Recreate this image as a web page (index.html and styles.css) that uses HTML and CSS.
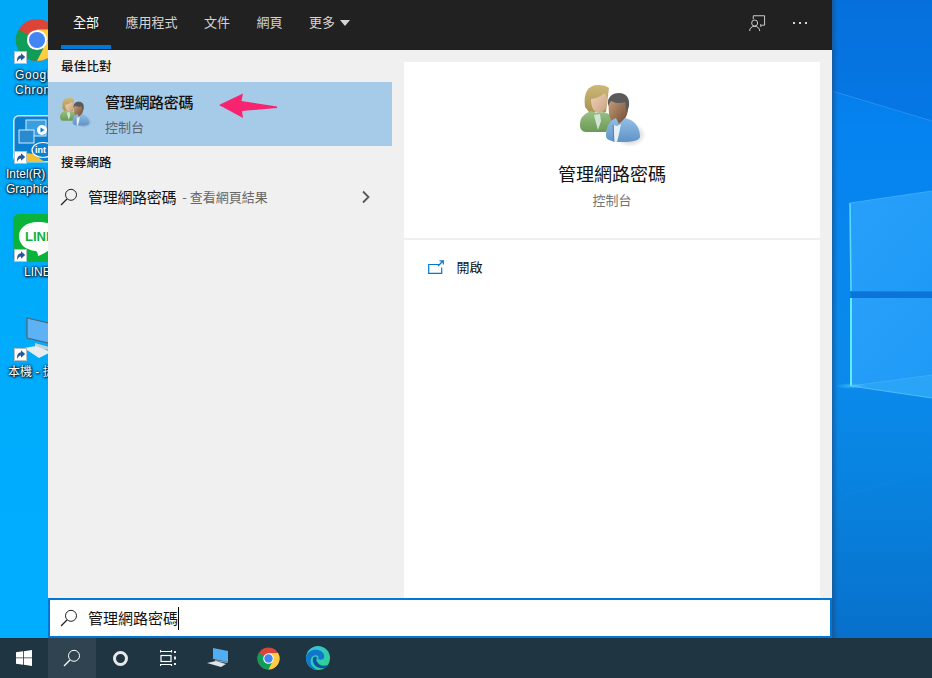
FILE: index.html
```html
<!DOCTYPE html>
<html lang="zh-Hant">
<head>
<meta charset="utf-8">
<title>管理網路密碼</title>
<link rel="stylesheet" href="styles.css">
</head>
<body>
<svg class="defs" width="0" height="0" aria-hidden="true">
  <defs>
    <linearGradient id="gGreen" x1="0" y1="0" x2="0" y2="1"><stop offset="0" stop-color="#9cc184"/><stop offset="1" stop-color="#6a9a56"/></linearGradient>
    <linearGradient id="gBlue" x1="0" y1="0" x2="0" y2="1"><stop offset="0" stop-color="#93bfe6"/><stop offset="1" stop-color="#5f92c6"/></linearGradient>
    <linearGradient id="gHair" x1="0" y1="0" x2="0" y2="1"><stop offset="0" stop-color="#cdb877"/><stop offset="1" stop-color="#a99455"/></linearGradient>
    <linearGradient id="gFaceW" x1="0" y1="0" x2="1" y2="1"><stop offset="0" stop-color="#f0d2b6"/><stop offset="1" stop-color="#c9a183"/></linearGradient>
    <linearGradient id="gFaceM" x1="0" y1="0" x2="1" y2="1"><stop offset="0" stop-color="#c9a07c"/><stop offset="1" stop-color="#6a4630"/></linearGradient>
    <radialGradient id="gShadow"><stop offset="0" stop-color="#000" stop-opacity=".32"/><stop offset="1" stop-color="#000" stop-opacity="0"/></radialGradient>
    <symbol id="people" viewBox="0 0 66 62">
      <ellipse cx="50" cy="50" rx="16" ry="12" fill="url(#gShadow)"/>
      <path d="M5 22C3 8 8 0 18 0c5 0 9 1 11 3l-3 24H9z" fill="url(#gHair)"/>
      <path d="M11 14c4 0 10-3 14-6 2 3 3 7 2 11-1 5-4 9-8 9-5 0-8-6-8-14z" fill="url(#gFaceW)"/>
      <path d="M0 40c0-8 4-11 11-14l6 2 7-1c5 2 9 4 9 8L26 47H6c-4 0-6-3-6-7z" fill="url(#gGreen)"/>
      <path d="M14 30l6-1 1 7-3 9-2-7z" fill="#cfe6d6"/>
      <path d="M28 14h19c2 9 1 17-4 22l-5 4c-5-1-8-5-9-11z" fill="url(#gFaceM)"/>
      <path d="M28 21C27 12 32 8 39 8c7 0 11 5 10 13l-2 7c-1-4-1-8-2-11-5 2-10 1-14-1-1 1-2 3-3 5z" fill="#5a5a5a"/>
      <path d="M26 51c0-9 3-15 10-18l3 6 6-6c9 2 15 8 15 19 0 3-8 5-17 5-11 0-17-2-17-6z" fill="url(#gBlue)"/>
      <path d="M34 40l3 1 4-2-2 10-2 8h-3z" fill="#e6eef6"/>
      <path d="M33 40l1 17" stroke="#4a78a8" stroke-width=".8" fill="none"/>
    </symbol>
    <symbol id="badge" viewBox="0 0 13 13">
      <rect x=".5" y=".5" width="12" height="12" fill="#fff" stroke="#b4bfc8"/>
      <path d="M3 11c-.2-4.500 1.500-6.500 4-6.700V2.200l4.200 3.700-4.200 3.800V7.600C5.200 7.800 4 9 3 11z" fill="#27589a"/>
    </symbol>
    <symbol id="chrome" viewBox="0 0 48 48">
      <circle cx="24" cy="24" r="23" fill="#db4437"/>
      <path d="M24 24L4 12.500A23 23 0 0 0 24 47l11.500-20z" fill="#0f9d58"/>
      <path d="M24 24l11.500 0L24 47A23 23 0 0 0 44 12.500H24z" fill="#ffcd40"/>
      <circle cx="24" cy="24" r="11" fill="#fff"/>
      <circle cx="24" cy="24" r="8.800" fill="#4285f4"/>
    </symbol>
    <symbol id="glass" viewBox="0 0 18 18">
      <circle cx="11" cy="6.800" r="5.500" fill="none" stroke="currentColor" stroke-width="1"/>
      <path d="M7 11L1 17" fill="none" stroke="currentColor" stroke-width="1.200"/>
    </symbol>
  </defs>
</svg>

<div class="screen">
  <main class="desktop">
    <svg class="wallpaper" viewBox="0 0 932 638" preserveAspectRatio="none" aria-hidden="true">
      <defs>
        <linearGradient id="wallL" x1="0" y1="0" x2="0" y2="1"><stop offset="0" stop-color="#00a8f8"/><stop offset="1" stop-color="#00aeff"/></linearGradient>
        <linearGradient id="wallR" x1="0" y1="0" x2="0" y2="1"><stop offset="0" stop-color="#0672dc"/><stop offset=".2" stop-color="#0583f0"/><stop offset=".6" stop-color="#0a8aec"/><stop offset=".8" stop-color="#0880dc"/><stop offset="1" stop-color="#0770cc"/></linearGradient>
        <linearGradient id="pane" x1="0" y1="0" x2="1" y2="1"><stop offset="0" stop-color="#28a0fa"/><stop offset="1" stop-color="#1e9af6"/></linearGradient>
        <linearGradient id="edge" x1="0" y1="0" x2="1" y2="0"><stop offset="0" stop-color="#1a4c80" stop-opacity=".6"/><stop offset="1" stop-color="#1a4c80" stop-opacity="0"/></linearGradient>
        <radialGradient id="glow"><stop offset="0" stop-color="#6fe8ff" stop-opacity=".45"/><stop offset="1" stop-color="#6fe8ff" stop-opacity="0"/></radialGradient>
      </defs>
      <rect width="832" height="638" fill="url(#wallL)"/>
      <rect x="832" width="100" height="638" fill="url(#wallR)"/>
      <path d="M832 0H932V121L832 91z" fill="#0670dc" opacity=".55"/>
      <path d="M832 91L932 121" stroke="#2590ee" stroke-width="1" fill="none"/>
      <path d="M840 497L932 470" stroke="#1a8fe6" stroke-width="1" fill="none" opacity=".3"/>
      <path d="M850 203L932 191V291H851z" fill="url(#pane)"/>
      <path d="M851 292H932V298H851z" fill="#0a74d8"/>
      <path d="M851 298H932V375L851 386z" fill="url(#pane)"/>
      <path d="M851 386L932 375V398z" fill="#2aa4f6"/>
      <path d="M850 203L851 291" stroke="#5fdcff" stroke-width="1.500" fill="none"/>
      <path d="M851 298L851 386" stroke="#62ecff" stroke-width="2" fill="none"/>
      <path d="M850 203L932 191M851 386L932 375" stroke="#45b0f8" stroke-width=".8" fill="none"/>
      <path d="M851 386L932 398" stroke="#4cbcf9" stroke-width="1.200"/>
      <ellipse cx="851" cy="386" rx="16" ry="3" fill="url(#glow)"/>
      <rect x="832" y="0" width="6" height="638" fill="url(#edge)"/>
    </svg>

    <div class="dicon dicon-chrome">
      <svg class="dicon-art" width="44" height="44"><use href="#chrome"/></svg>
      <svg class="badge" width="13" height="13"><use href="#badge"/></svg>
    </div>
    <div class="dlabel dlabel-chrome">Google<br>Chrome</div>

    <div class="dicon dicon-intel">
      <svg class="dicon-art" width="48" height="48" viewBox="0 0 48 48">
        <rect x=".8" y=".8" width="46" height="46" rx="5" fill="#0b7fd0" stroke="#cfe3f2" stroke-width="1.600"/>
        <rect x="13" y="5" width="20" height="16" fill="#3a9fe0" stroke="#cfeaff"/>
        <rect x="6" y="15" width="15" height="13" fill="#2a8ad0" stroke="#cfeaff"/>
        <circle cx="29" cy="15" r="5" fill="#fff"/>
        <path d="M27.500 12.500v5l4-2.500z" fill="#0b7fd0"/>
        <path d="M0 36l20 3 12 8H3z" fill="#f2c230"/>
        <ellipse cx="30" cy="35" rx="11" ry="7.500" fill="#0b7fd0" stroke="#fff" stroke-width="1.200"/>
        <text class="intel-text" x="22" y="38">int</text>
      </svg>
      <svg class="badge" width="13" height="13"><use href="#badge"/></svg>
    </div>
    <div class="dlabel dlabel-intel">Intel(R)<br>Graphics</div>

    <div class="dicon dicon-line">
      <svg class="dicon-art" width="48" height="48" viewBox="0 0 48 48">
        <rect width="48" height="48" rx="6" fill="#0ab43a"/>
        <path d="M25 8C12 8 6 15 6 22c0 8 6 14 17 15 1 1 2 2 2 5 3-1 9-4 14-8 6-4 9-8 9-12 0-8-10-14-23-14z" fill="#fff"/>
        <text class="line-text" x="12" y="27">LINE</text>
      </svg>
      <svg class="badge" width="13" height="13"><use href="#badge"/></svg>
    </div>
    <div class="dlabel dlabel-line">LINE</div>

    <div class="dicon dicon-pc">
      <svg class="dicon-art" width="48" height="48" viewBox="0 0 48 48">
        <path d="M14 3l30 7v20L14 23z" fill="#5cb2f5" stroke="#4e6472" stroke-width="1.200"/>
        <path d="M22 28l14 4 2 3-10-1-6-2z" fill="#c6d0d6"/>
        <path d="M11 33l12-2 15 6-12 6z" fill="#e8ecef"/>
      </svg>
      <svg class="badge" width="13" height="13"><use href="#badge"/></svg>
    </div>
    <div class="dlabel dlabel-pc">本機 - 捷徑</div>

    <section class="search-window">
      <header class="topbar">
        <nav class="tabs">
          <a class="tab tab-active">全部</a>
          <a class="tab">應用程式</a>
          <a class="tab">文件</a>
          <a class="tab">網頁</a>
          <a class="tab">更多<span class="caret"></span></a>
        </nav>
        <div class="top-actions">
          <svg class="feedback" width="17" height="17" viewBox="0 0 18 18" fill="none" stroke="#d6d6d6" stroke-width="1">
            <path d="M4.500 4.500V.8h12v10h-2.500l-1.500 1.500V9.500"/>
            <circle cx="6" cy="8.500" r="3.200"/>
            <path d="M.7 17c0-3 2-5 5.300-5s5.300 2 5.300 5"/>
          </svg>
          <div class="dots"><i></i><i></i><i></i></div>
        </div>
      </header>

      <div class="panes">
        <div class="results">
          <h2 class="group-title">最佳比對</h2>
          <div class="best">
            <svg class="best-icon" width="32" height="30"><use href="#people"/></svg>
            <div class="best-text">
              <div class="best-name">管理網路密碼</div>
              <div class="best-sub">控制台</div>
            </div>
          </div>
          <h2 class="group-title">搜尋網路</h2>
          <div class="web-row">
            <svg class="glass-dark" width="18" height="18"><use href="#glass"/></svg>
            <span class="web-query">管理網路密碼</span>
            <span class="web-hint">- 查看網頁結果</span>
            <svg class="chev" width="10" height="14" viewBox="0 0 10 14"><path d="M2 1.500L7.500 7 2 12.500" fill="none" stroke="#555" stroke-width="1.800"/></svg>
          </div>
          <svg class="pink-arrow" width="60" height="26" viewBox="0 0 60 26">
            <path d="M0 12L24 .5 22.500 8 58 13.500 58 15 23 18 24 25z" fill="#f8246f"/>
          </svg>
        </div>

        <aside class="detail">
          <div class="detail-head">
            <svg class="detail-icon" width="66" height="62"><use href="#people"/></svg>
            <div class="detail-name">管理網路密碼</div>
            <div class="detail-sub">控制台</div>
          </div>
          <div class="detail-action">
            <svg width="16" height="14" viewBox="0 0 16 14" fill="none" stroke="#0078d7" stroke-width="1.200">
              <path d="M11 4.500H.7v8.800h13V7.500"/>
              <path d="M10 6l5-5M11.500.8h3.800v3.800"/>
            </svg>
            <span>開啟</span>
          </div>
        </aside>
      </div>

      <div class="searchbox">
        <svg class="glass-dark" width="18" height="18"><use href="#glass"/></svg>
        <span class="query">管理網路密碼</span><span class="cursor"></span>
      </div>
    </section>
  </main>

  <footer class="taskbar">
    <div class="tb-cell">
      <svg width="16" height="16" viewBox="0 0 16 16" fill="#fff"><path d="M0 2.300L7 1.300V7.500H0zM7.800 1.200L16 0V7.500H7.800zM0 8.300H7V14.700L0 13.700zM7.800 8.300H16V16L7.800 14.800z"/></svg>
    </div>
    <div class="tb-cell tb-active">
      <svg class="glass-white" width="18" height="18"><use href="#glass"/></svg>
    </div>
    <div class="tb-cell">
      <span class="cortana"></span>
    </div>
    <div class="tb-cell tb-task">
      <svg width="16" height="16" viewBox="0 0 16 16" fill="none" stroke="#fff" stroke-width="1.200">
        <path d="M.5 0V2.500M.5 14v2M11.500 0V2.500M11.500 14v2M.5 1.500h11M.5 14.500h11"/>
        <rect x="1" y="5.500" width="10" height="6"/>
        <path d="M15 1v2M15 6.500v3M15 13v2" stroke-width="1.800"/>
      </svg>
    </div>
    <div class="tb-cell tb-app">
      <svg width="24" height="20" viewBox="0 0 24 20">
        <path d="M7 0l15 3v11L7 11z" fill="#52aef2"/>
        <path d="M9 12l13 2-1 1-12-2z" fill="#a0a8ae"/>
        <path d="M1 15l9-2 10 3-5 3z" fill="#dfe4e7"/>
      </svg>
    </div>
    <div class="tb-cell tb-app">
      <svg width="23" height="23"><use href="#chrome"/></svg>
    </div>
    <div class="tb-cell tb-app">
      <svg width="24" height="24" viewBox="0 0 24 24">
        <defs>
          <linearGradient id="edgeA" x1="0" y1="0" x2="1" y2="1"><stop offset="0" stop-color="#35c1f1"/><stop offset="1" stop-color="#2fd27a"/></linearGradient>
        </defs>
        <circle cx="12" cy="12" r="12" fill="url(#edgeA)"/>
        <path d="M0 12C1 5 7 3 12 4c5 1 7 5 6 8-1 2-4 2-6 1 2-3-2-5-5-3-4 3-3 11 4 13.500C4 23.500 0 18 0 12z" fill="#0f78c8"/>
        <path d="M7 12c-1 5 2 9 7 10 4 1 8-1 10-4-3 2-9 3-12-1-2-2-2-3-1-5-1-2-3-1-4 0z" fill="#0c56a0"/>
      </svg>
    </div>
  </footer>
</div>
</body>
</html>
```

FILE: styles.css
```css
* { box-sizing: border-box; }
html, body { margin: 0; padding: 0; height: 100%; }
body {
  width: 932px;
  height: 678px;
  overflow: hidden;
  font-family: "Noto Sans CJK TC", "Liberation Sans", sans-serif;
  color: #000;
}
.defs { position: absolute; }
.screen { display: flex; flex-direction: column; width: 932px; height: 678px; }
.desktop { position: relative; flex: 1; overflow: hidden; }
.wallpaper { position: absolute; inset: 0; width: 100%; height: 100%; display: block; }

/* desktop icons: free canvas */
.dicon { position: absolute; width: 48px; height: 48px; }
.dicon-art { display: block; }
.badge { position: absolute; display: block; }
.dicon-chrome { left: 15px; top: 18px; }
.dicon-chrome .badge { left: -1px; top: 33px; }
.dicon-intel { left: 13px; top: 115px; }
.dicon-intel .badge { left: 1px; top: 36px; }
.dicon-line { left: 13px; top: 214px; }
.dicon-line .badge { left: 1px; top: 35px; }
.dicon-pc { left: 13px; top: 315px; }
.dicon-pc .badge { left: 1px; top: 33px; }
.line-text { font: 700 13px "Liberation Sans", sans-serif; fill: #0ab43a; }
.intel-text { font: 700 9px "Liberation Sans", sans-serif; fill: #fff; }
.dlabel {
  position: absolute;
  width: 90px;
  font: 12px/15px "Liberation Sans", "Noto Sans CJK TC", sans-serif;
  color: #fff;
  white-space: nowrap;
  text-shadow: 0 0 2px #012, 0 0 3px #012, 1px 1px 2px #012;
}
.dlabel-chrome { left: 15px; top: 68px; letter-spacing: .6px; }
.dlabel-intel { left: 6px; top: 167px; }
.dlabel-line { left: 24px; top: 265px; }
.dlabel-pc { left: 8px; top: 365px; }

/* search window */
.search-window {
  position: absolute;
  left: 48px;
  top: 0;
  bottom: 0;
  width: 784px;
  display: flex;
  flex-direction: column;
  background: #f0f0f0;
}
.topbar {
  flex: 0 0 50px;
  display: flex;
  justify-content: space-between;
  background: #212121;
  padding-left: 13px;
}
.tabs { display: flex; gap: 2.500px; }
.tab {
  display: flex;
  align-items: center;
  height: 50px;
  padding: 0 12px 6px;
  font-size: 13px;
  line-height: 18px;
  color: #d4d4d4;
}
.tab-active { color: #fff; position: relative; }
.tab-active::after {
  content: "";
  position: absolute;
  left: 0;
  right: 0;
  top: 45px;
  height: 4px;
  background: #0078d7;
}
.caret {
  margin-left: 5px;
  margin-top: 2px;
  border-left: 5.500px solid transparent;
  border-right: 5.500px solid transparent;
  border-top: 6px solid #d4d4d4;
}
.top-actions { display: flex; align-items: center; padding: 0 25px 6px 0; gap: 27px; }
.feedback { display: block; margin-top: 2px; }
.dots { display: flex; gap: 4px; margin-top: 2px; }
.dots i { width: 2px; height: 2px; background: #d6d6d6; display: block; }

.panes { flex: 1; display: flex; min-height: 0; }
.results { position: relative; flex: 0 0 356px; padding-right: 12px; }
.group-title {
  margin: 0;
  padding: 7px 0 0 13px;
  height: 32px;
  font-size: 12.500px;
  line-height: 18px;
  font-weight: 500;
  letter-spacing: .2px;
  color: #111;
}
.best {
  display: flex;
  align-items: center;
  height: 64px;
  padding-left: 12px;
  background: #a6cbe9;
}
.best-icon { display: block; margin-top: -3px; }
.best-text { margin-left: 13px; }
.best-name { font-size: 15px; line-height: 20px; font-weight: 500; margin-top: -1px; color: #111; letter-spacing: -.3px; }
.best-sub { font-size: 13px; line-height: 18px; margin-top: 6px; color: #5b6670; }
.web-row {
  display: flex;
  align-items: center;
  height: 30px;
  margin-top: 4px;
  padding-left: 12px;
  position: relative;
}
.glass-dark { color: #222; display: block; flex: none; }
.glass-white { color: #fff; display: block; }
.web-query { margin-left: 10px; font-size: 15px; line-height: 20px; color: #111; letter-spacing: -.3px; }
.web-hint { margin-left: 6px; font-size: 13px; line-height: 20px; color: #666; }
.chev { position: absolute; left: 313px; top: 8px; display: block; }
.pink-arrow { position: absolute; left: 171px; top: 43px; display: block; }

.detail {
  flex: 0 0 416px;
  margin-top: 12px;
  background: #fff;
  display: flex;
  flex-direction: column;
}
.detail-head {
  flex: 0 0 178px;
  display: flex;
  flex-direction: column;
  align-items: center;
  border-bottom: 2px solid #f0f0f0;
  padding-top: 23px;
}
.detail-icon { display: block; margin-left: 2px; }
.detail-name { margin-top: 14px; font-size: 18px; line-height: 24px; color: #111; }
.detail-sub { margin-top: 6px; font-size: 13px; line-height: 18px; color: #767676; }
.detail-action {
  display: flex;
  align-items: center;
  gap: 12.500px;
  padding: 17px 0 0 24px;
  font-size: 13px;
  line-height: 20px;
  color: #111;
}

.searchbox {
  flex: 0 0 40px;
  display: flex;
  align-items: center;
  padding-left: 10px;
  background: #fff;
  border: 2px solid #0078d7;
}
.query { margin-left: 10px; font-size: 15px; line-height: 20px; color: #111; }
.cursor { width: 1px; height: 23px; background: #000; }

/* taskbar */
.taskbar { flex: 0 0 40px; display: flex; background: #1f3542; }
.tb-cell { width: 48px; height: 40px; display: flex; align-items: center; justify-content: center; flex: none; }
.tb-active { background: #2f4350; }
.tb-task { margin-right: 1px; }
.tb-app { width: 50px; }
.cortana { width: 15px; height: 15px; border: 3px solid #e8e8e8; border-radius: 50%; display: block; }
```
